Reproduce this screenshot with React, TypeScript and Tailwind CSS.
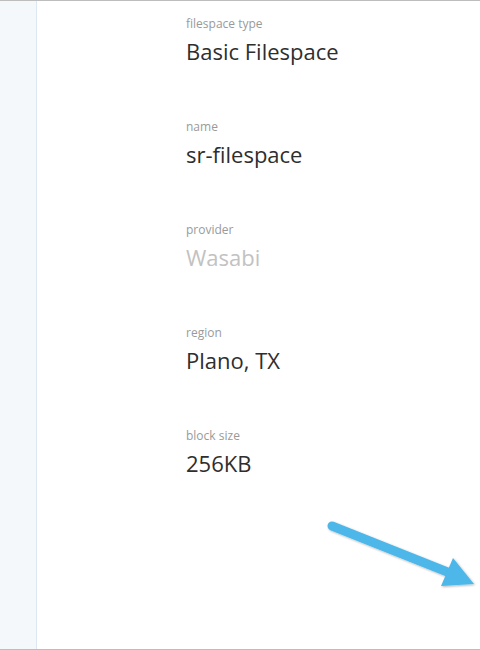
const fields = [
  { label: 'filespace type', value: 'Basic Filespace' },
  { label: 'name', value: 'sr-filespace' },
  { label: 'provider', value: 'Wasabi', muted: true },
  { label: 'region', value: 'Plano, TX' },
  { label: 'block size', value: '256KB' },
]

export default function App() {
  return (
    <div
      className="relative flex h-[650px] w-[480px] overflow-hidden border-y border-[#bdbdbd] bg-white"
      style={{ fontFamily: '"Open Sans", sans-serif' }}
    >
      {/* sidebar */}
      <div className="w-[37px] shrink-0 border-r border-[#dde7f1] bg-[#f5f8fb]" />

      <div className="flex flex-1 flex-col gap-[49px] pl-[149px] pt-[15px]">
        {fields.map((f) => (
          <div key={f.label} className="flex flex-col">
            <span className="text-[12px] leading-[16px] text-[#9a9a9a]">{f.label}</span>
            <span
              className={`text-[22px] leading-[38px] ${f.muted ? 'text-[#c2c2c2]' : 'text-[#2e2e2e]'}`}
            >
              {f.value}
            </span>
          </div>
        ))}
      </div>

      {/* annotation arrow */}
      <svg className="absolute left-0 top-0 h-[650px] w-[480px]" viewBox="0 0 480 650">
        <defs>
          <filter id="sh" x="-20%" y="-20%" width="140%" height="140%">
            <feDropShadow dx="1" dy="1" stdDeviation="1.2" floodColor="#000" floodOpacity="0.3" />
          </filter>
        </defs>
        <g filter="url(#sh)" fill="#4db7e9" stroke="#4db7e9">
          <line x1="332" y1="525" x2="450" y2="572" strokeWidth="9" strokeLinecap="round" />
          <polygon points="453,557 474,583 441,585" stroke="none" />
        </g>
      </svg>
    </div>
  )
}
